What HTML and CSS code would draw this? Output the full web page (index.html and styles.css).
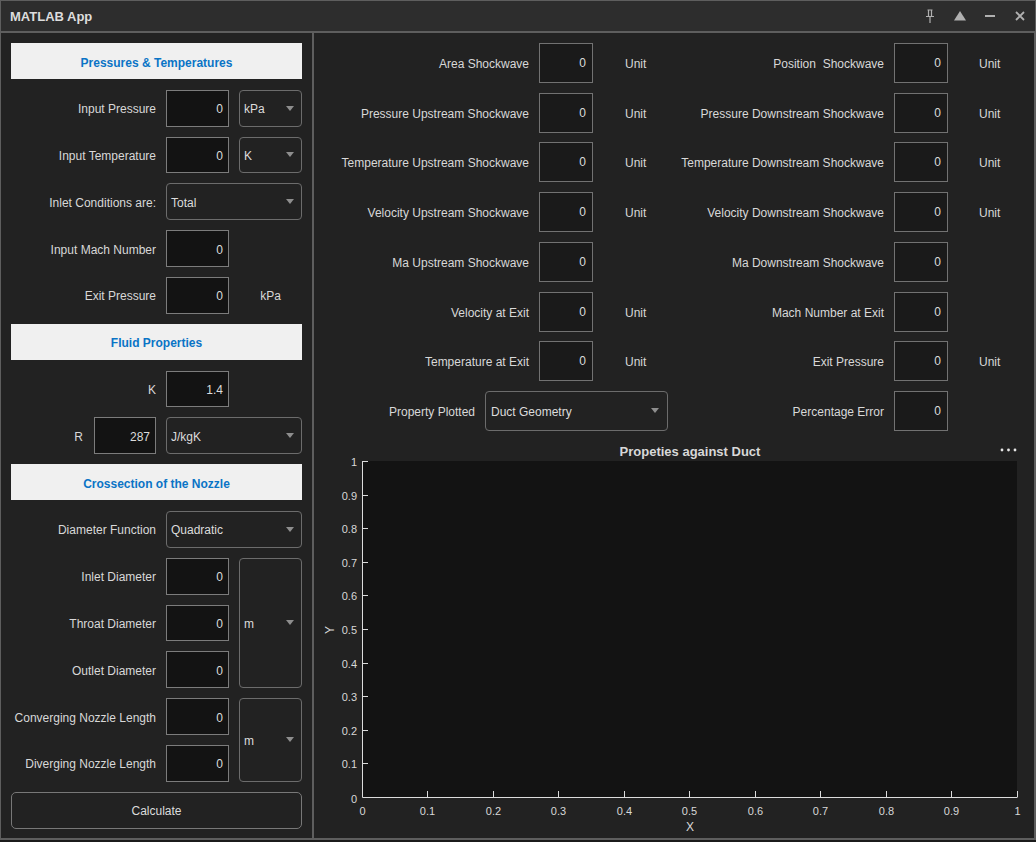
FILE: index.html
```html
<!DOCTYPE html>
<html>
<head>
<meta charset="utf-8">
<title>MATLAB App</title>
<link rel="stylesheet" href="styles.css">
</head>
<body>
<div class="window">
  <div class="titlebar">
    <span class="title">MATLAB App</span>
    <div class="controls">
      <span class="ctl"><svg width="10" height="14" viewBox="0 0 10 14"><path d="M2.5 1h5M3.5 1v6M6.5 1v6M1 7.5h8M5 7.5V14" fill="none" stroke="#b0b0b0" stroke-width="1.2"/></svg></span>
      <span class="ctl"><svg width="12" height="10" viewBox="0 0 12 10"><path d="M0 9.5L6 0l6 9.5z" fill="#b0b0b0"/></svg></span>
      <span class="ctl"><svg width="10" height="4" viewBox="0 0 10 4"><rect x="0" y="1" width="10" height="2" fill="#b0b0b0"/></svg></span>
      <span class="ctl"><svg width="10" height="10" viewBox="0 0 10 10"><path d="M1 1l8 8M9 1l-8 8" stroke="#b0b0b0" stroke-width="1.8"/></svg></span>
    </div>
  </div>
  <div class="main">
    <section class="left">
      <div class="header">Pressures &amp; Temperatures</div>

      <span class="lbl">Input Pressure</span>
      <div class="edit">0</div>
      <div class="dd c3"><span>kPa</span><svg class="caret" width="8" height="5" viewBox="0 0 8 5"><path d="M0 0h8L4 5z"/></svg></div>

      <span class="lbl">Input Temperature</span>
      <div class="edit">0</div>
      <div class="dd c3"><span>K</span><svg class="caret" width="8" height="5" viewBox="0 0 8 5"><path d="M0 0h8L4 5z"/></svg></div>

      <span class="lbl">Inlet Conditions are:</span>
      <div class="dd c23"><span>Total</span><svg class="caret" width="8" height="5" viewBox="0 0 8 5"><path d="M0 0h8L4 5z"/></svg></div>

      <span class="lbl">Input Mach Number</span>
      <div class="edit">0</div>

      <span class="lbl">Exit Pressure</span>
      <div class="edit">0</div>
      <span class="unitc">kPa</span>

      <div class="header">Fluid Properties</div>

      <span class="lbl">K</span>
      <div class="edit">1.4</div>

      <div class="rcell"><span class="rlbl">R</span><div class="edit redit">287</div></div>
      <div class="dd c23"><span>J/kgK</span><svg class="caret" width="8" height="5" viewBox="0 0 8 5"><path d="M0 0h8L4 5z"/></svg></div>

      <div class="header">Crossection of the Nozzle</div>

      <span class="lbl">Diameter Function</span>
      <div class="dd c23"><span>Quadratic</span><svg class="caret" width="8" height="5" viewBox="0 0 8 5"><path d="M0 0h8L4 5z"/></svg></div>

      <span class="lbl">Inlet Diameter</span>
      <div class="edit">0</div>
      <div class="dd c3 span3"><span>m</span><svg class="caret" width="8" height="5" viewBox="0 0 8 5"><path d="M0 0h8L4 5z"/></svg></div>

      <span class="lbl">Throat Diameter</span>
      <div class="edit">0</div>

      <span class="lbl">Outlet Diameter</span>
      <div class="edit">0</div>

      <span class="lbl">Converging Nozzle Length</span>
      <div class="edit">0</div>
      <div class="dd c3 span2"><span>m</span><svg class="caret" width="8" height="5" viewBox="0 0 8 5"><path d="M0 0h8L4 5z"/></svg></div>

      <span class="lbl">Diverging Nozzle Length</span>
      <div class="edit">0</div>

      <button class="btn">Calculate</button>
    </section>

    <section class="right">
      <div class="fields">
        <div class="group ga">
          <span class="lbl">Area Shockwave</span><div class="edit redge">0</div><span class="unit">Unit</span>
          <span class="lbl">Pressure Upstream Shockwave</span><div class="edit redge">0</div><span class="unit">Unit</span>
          <span class="lbl">Temperature Upstream Shockwave</span><div class="edit redge">0</div><span class="unit">Unit</span>
          <span class="lbl">Velocity Upstream Shockwave</span><div class="edit redge">0</div><span class="unit">Unit</span>
          <span class="lbl">Ma Upstream Shockwave</span><div class="edit redge">0</div><span class="unit"></span>
          <span class="lbl">Velocity at Exit</span><div class="edit redge">0</div><span class="unit">Unit</span>
          <span class="lbl">Temperature at Exit</span><div class="edit redge">0</div><span class="unit">Unit</span>
          <div class="prop">
            <span class="lbl">Property Plotted</span>
            <div class="dd pdd"><span>Duct Geometry</span><svg class="caret" width="8" height="5" viewBox="0 0 8 5"><path d="M0 0h8L4 5z"/></svg></div>
          </div>
        </div>
        <div class="group gb">
          <span class="lbl">Position&nbsp; Shockwave</span><div class="edit redge">0</div><span class="unit">Unit</span>
          <span class="lbl">Pressure Downstream Shockwave</span><div class="edit redge">0</div><span class="unit">Unit</span>
          <span class="lbl">Temperature Downstream Shockwave</span><div class="edit redge">0</div><span class="unit">Unit</span>
          <span class="lbl">Velocity Downstream Shockwave</span><div class="edit redge">0</div><span class="unit">Unit</span>
          <span class="lbl">Ma Downstream Shockwave</span><div class="edit redge">0</div><span class="unit"></span>
          <span class="lbl">Mach Number at Exit</span><div class="edit redge">0</div><span class="unit"></span>
          <span class="lbl">Exit Pressure</span><div class="edit redge">0</div><span class="unit">Unit</span>
          <span class="lbl">Percentage Error</span><div class="edit redge">0</div><span class="unit"></span>
        </div>
      </div>

      <svg class="plot" width="700" height="397" viewBox="0 0 700 397">
        <text class="ptitle" x="366" y="15" text-anchor="middle">Propeties against Duct</text>
        <circle cx="678" cy="9" r="1.4" fill="#e6e6e6"/>
        <circle cx="684.5" cy="9" r="1.4" fill="#e6e6e6"/>
        <circle cx="691" cy="9" r="1.4" fill="#e6e6e6"/>
        <rect x="38" y="20" width="655" height="336" fill="#131313"/>
        <g stroke="#dcdcdc" stroke-width="1" fill="none">
          <path d="M38.5 20V356.5H693.5"/>
          <path d="M38 20.5h6M38 54.5h6M38 87.5h6M38 121.5h6M38 154.5h6M38 188.5h6M38 222.5h6M38 255.5h6M38 289.5h6M38 322.5h6"/>
          <path d="M103.5 356v-6M169.5 356v-6M234.5 356v-6M300.5 356v-6M365.5 356v-6M431.5 356v-6M496.5 356v-6M562.5 356v-6M627.5 356v-6M693.5 356v-6"/>
        </g>
        <g class="tick" text-anchor="end">
          <text x="33" y="25">1</text>
          <text x="33" y="59">0.9</text>
          <text x="33" y="92">0.8</text>
          <text x="33" y="126">0.7</text>
          <text x="33" y="159">0.6</text>
          <text x="33" y="193">0.5</text>
          <text x="33" y="227">0.4</text>
          <text x="33" y="260">0.3</text>
          <text x="33" y="294">0.2</text>
          <text x="33" y="327">0.1</text>
          <text x="33" y="362">0</text>
        </g>
        <g class="tick" text-anchor="middle">
          <text x="38.5" y="374">0</text>
          <text x="103.5" y="374">0.1</text>
          <text x="169.5" y="374">0.2</text>
          <text x="234.5" y="374">0.3</text>
          <text x="300.5" y="374">0.4</text>
          <text x="365.5" y="374">0.5</text>
          <text x="431.5" y="374">0.6</text>
          <text x="496.5" y="374">0.7</text>
          <text x="562.5" y="374">0.8</text>
          <text x="627.5" y="374">0.9</text>
          <text x="693.5" y="374">1</text>
        </g>
        <text class="axlbl" x="366" y="390" text-anchor="middle">X</text>
        <text class="axlbl" x="10" y="189" text-anchor="middle" transform="rotate(-90 10 189)">Y</text>
      </svg>
    </section>
  </div>
</div>
</body>
</html>
```

FILE: styles.css
```css
html, body {
  margin: 0;
  padding: 0;
}
body {
  background: #1b1b1b;
  font-family: "Liberation Sans", Arial, sans-serif;
  font-size: 12px;
  color: #d8d8d8;
}
.window {
  width: 1036px;
  height: 840px;
  box-sizing: border-box;
  border: 1px solid #5e5e5e;
  border-bottom: none;
  display: flex;
  flex-direction: column;
  background: #222222;
}
.titlebar {
  height: 30px;
  flex: none;
  background: #2d2d2d;
  display: flex;
  align-items: center;
  justify-content: space-between;
  padding-left: 9px;
}
.title {
  font-weight: bold;
  font-size: 13px;
  color: #dddddd;
  padding-top: 1px;
}
.controls {
  display: flex;
  height: 30px;
}
.ctl {
  width: 30px;
  height: 30px;
  display: flex;
  align-items: center;
  justify-content: center;
}
.main {
  flex: 1;
  display: flex;
  border-top: 2px solid #5e5e5e;
  border-bottom: 2px solid #5e5e5e;
  min-height: 0;
}
.left {
  width: 313px;
  box-sizing: border-box;
  padding: 10px 10px 0 10px;
  border-right: 2px solid #5e5e5e;
  display: grid;
  grid-template-columns: 145px 63px 63px;
  column-gap: 10px;
  grid-template-rows: repeat(17, 36.8px);
  row-gap: 10px;
  align-content: start;
}
.header {
  grid-column: 1 / -1;
  box-sizing: border-box;
  background: #f0f0f0;
  color: #0a74c6;
  font-weight: bold;
  display: flex;
  align-items: center;
  justify-content: center;
  height: 36px;
  padding-top: 3px;
}
.lbl {
  grid-column: 1;
  align-self: center;
  text-align: right;
  white-space: nowrap;
  color: #d8d8d8;
  padding-top: 2px;
}
.edit {
  grid-column: 2;
  box-sizing: border-box;
  background: #131313;
  border: 1px solid #7c7c7c;
  display: flex;
  align-items: center;
  justify-content: flex-end;
  padding: 2px 5px 0 0;
  color: #dcdcdc;
}
.dd {
  box-sizing: border-box;
  border: 1px solid #6c6c6c;
  border-radius: 4px;
  display: flex;
  align-items: center;
  justify-content: space-between;
  padding: 2px 7px 0 4px;
  color: #dcdcdc;
}
.caret {
  fill: #8e8e8e;
  flex: none;
  margin-top: -2px;
}
.c3 { grid-column: 3; }
.c23 { grid-column: 2 / 4; }
.span3 { grid-row: span 3; }
.span2 { grid-row: span 2; }
.unitc {
  grid-column: 3;
  align-self: center;
  text-align: center;
  padding-top: 2px;
}
.rcell {
  grid-column: 1;
  display: flex;
  justify-content: flex-end;
  align-items: stretch;
  gap: 10px;
}
.rlbl {
  align-self: center;
  padding: 2px 1px 0 0;
}
.redit {
  width: 62px;
}
.btn {
  grid-column: 1 / -1;
  font: inherit;
  color: #dcdcdc;
  background: #222222;
  border: 1px solid #787878;
  border-radius: 5px;
  padding: 2px 0 0 0;
}
.right {
  flex: 1;
  box-sizing: border-box;
  padding: 10px 10px 0 10px;
  border-right: 1px solid #5e5e5e;
  display: flex;
  flex-direction: column;
  min-width: 0;
}
.fields {
  display: flex;
  height: 388px;
  flex: none;
}
.group {
  display: grid;
  grid-template-rows: repeat(8, 40px);
  row-gap: 9.71px;
  column-gap: 10px;
}
.ga {
  width: 346px;
  grid-template-columns: 205px 54px 1fr;
}
.gb {
  flex: 1;
  grid-template-columns: 214px 54px 1fr;
}
.redge {
  background: #1a1a1a;
  border-color: #727272;
  padding-right: 6px;
  padding-top: 0;
}
.unit {
  align-self: center;
  white-space: nowrap;
  padding-top: 2px;
}
.ga .unit { padding-left: 22px; }
.gb .unit { padding-left: 21px; }
.prop {
  grid-column: 1 / -1;
  display: flex;
  gap: 10px;
}
.prop .lbl {
  width: 151px;
  flex: none;
}
.pdd {
  width: 183px;
  flex: none;
  padding: 2px 8px 0 5px;
}
.plot {
  display: block;
  margin-top: 10px;
  flex: none;
}
.plot text {
  font-family: "Liberation Sans", Arial, sans-serif;
  fill: #d8d8d8;
}
.ptitle {
  font-size: 13px;
  font-weight: bold;
}
.tick {
  font-size: 11px;
}
.axlbl {
  font-size: 12px;
}
```
